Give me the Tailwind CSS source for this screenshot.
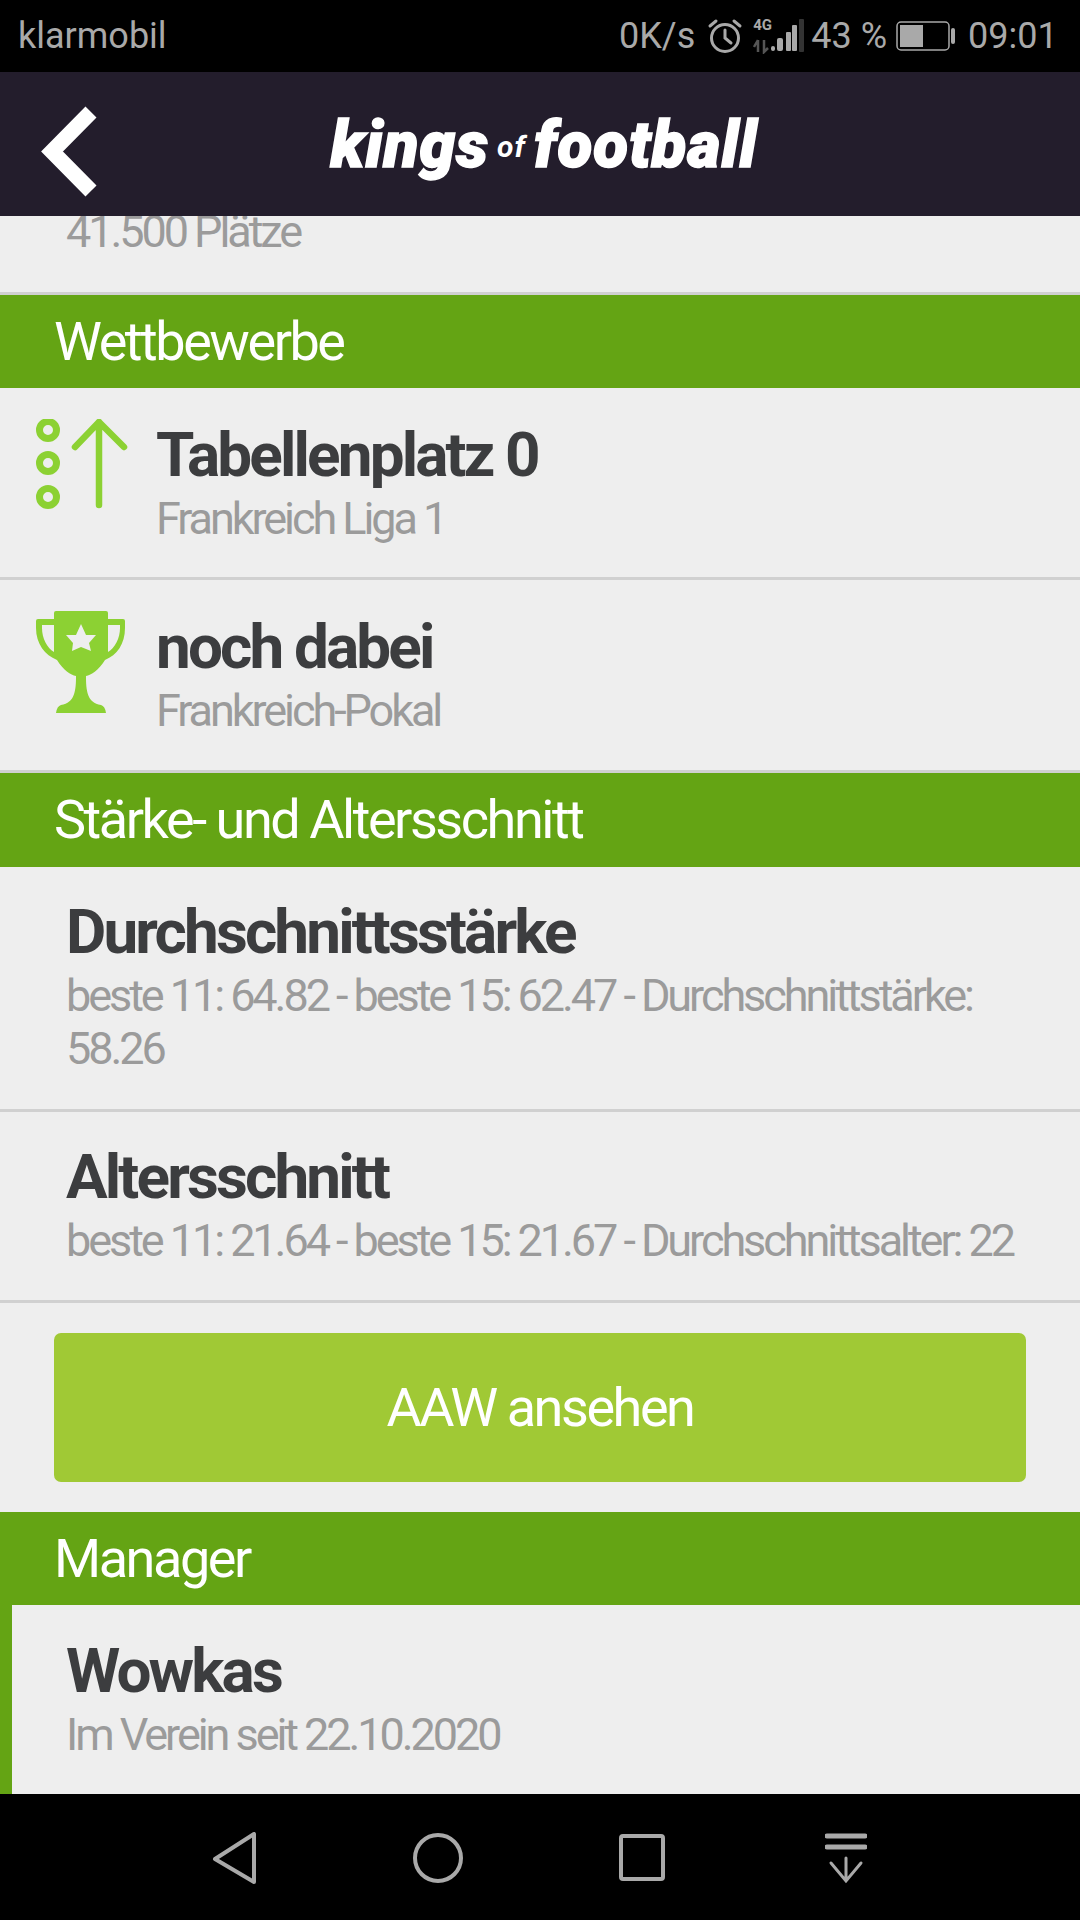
<!DOCTYPE html>
<html lang="de">
<head>
    <meta charset="UTF-8">
    <meta name="viewport" content="width=device-width, initial-scale=1.0">
    <title>Kings of Football</title>
    <script src="https://cdn.jsdelivr.net/npm/@tailwindcss/browser@4"></script>
</head>
<body class="bg-[#eeeeee] font-['Roboto',sans-serif]">
<div class="w-[1080px] h-[1920px] flex flex-col overflow-hidden">

    <!-- status bar -->
    <div class="h-[72px] bg-black flex items-center pl-[18px] text-[#a9a9a9] text-[36px] shrink-0">
        <span class="w-[601px]">klarmobil</span>
        <span>0K/s</span>
        <svg class="ml-[12px]" width="36" height="36" viewBox="0 0 36 36" fill="none" stroke="#a9a9a9" stroke-width="3">
            <circle cx="18" cy="20" r="13.5"/>
            <path d="M18 12v8l6 5M3 8l6-5M33 8l-6-5" stroke-linecap="round"/>
        </svg>
        <div class="relative ml-[10px] w-[52px] h-[36px]">
            <span class="absolute left-0 top-0 text-[15px] leading-[15px] font-bold">4G</span>
            <svg class="absolute left-0 top-0" width="52" height="36" viewBox="0 0 52 36">
                <path d="M5 22v12M1 29l4-7M11 22v12l4-4" fill="none" stroke="#555" stroke-width="2.5"/>
                <rect x="18" y="28" width="4" height="5" rx="2" fill="#a9a9a9"/>
                <rect x="24" y="20" width="6" height="13" rx="2" fill="#a9a9a9"/>
                <rect x="33" y="14" width="5" height="19" rx="1" fill="#a9a9a9"/>
                <rect x="39" y="7" width="5" height="26" rx="1" fill="#a9a9a9"/>
                <rect x="46" y="1" width="5" height="33" rx="1" fill="#333"/>
            </svg>
        </div>
        <span class="ml-[6px]">43 %</span>
        <svg class="ml-[9px]" width="60" height="32" viewBox="0 0 60 32">
            <rect x="1" y="2" width="52" height="28" rx="4" fill="none" stroke="#a9a9a9" stroke-width="1.5"/>
            <rect x="4" y="5" width="23" height="22" fill="#a9a9a9"/>
            <rect x="55" y="8" width="4" height="16" rx="2" fill="#a9a9a9"/>
        </svg>
        <span class="ml-[12px]">09:01</span>
    </div>

    <!-- header -->
    <div class="relative h-[144px] bg-[#231d2c] flex items-center justify-center shrink-0">
        <svg class="absolute left-0 top-[-72px]" width="110" height="216" viewBox="0 0 110 216" fill="none" stroke="#fff" stroke-width="15.5">
            <path d="M91 112 52 151.5 91 191"/>
        </svg>
        <div class="text-white font-black italic text-[64px] tracking-[1px] leading-[80px] ml-[8px] mt-[5px] [-webkit-text-stroke:1.5px_white]">kings<span class="text-[30px] font-bold mx-[8px] align-[10px] [-webkit-text-stroke:0]">of</span>football</div>
    </div>

    <!-- content -->
    <div class="flex-1 flex flex-col overflow-hidden">
        <div class="h-[79px] overflow-hidden border-b-[3px] border-[#d0d0d0] shrink-0">
            <p class="pl-[66px] text-[#9b9b9b] text-[45px] tracking-[-3.06px] leading-[52px] mt-[-10px]">41.500 Plätze</p>
        </div>

        <div class="h-[93px] bg-[#64a414] text-white text-[54px] tracking-[-2.45px] leading-[94px] pl-[54px] shrink-0">Wettbewerbe</div>

        <div class="h-[192px] flex border-b-[3px] border-[#d0d0d0] shrink-0">
            <svg class="ml-[36px] mt-[31px] shrink-0" width="92" height="92" viewBox="36 419 92 92" fill="none" stroke="#8cd133">
                <circle cx="48" cy="430" r="8.5" stroke-width="7"/>
                <circle cx="48" cy="463" r="8.5" stroke-width="7"/>
                <circle cx="48" cy="497" r="8.5" stroke-width="7"/>
                <path d="M99 505V422M75 447l24-25 25 25" stroke-width="6.5" stroke-linecap="round" stroke-linejoin="round"/>
            </svg>
            <div class="ml-[28px] pt-[37px]">
                <p class="text-[#3c3d3f] text-[62px] font-bold leading-[60px] tracking-[-2.85px]">Tabellenplatz 0</p>
                <p class="text-[#9b9b9b] text-[45px] leading-[53px] tracking-[-3.06px] mt-[7px]">Frankreich Liga 1</p>
            </div>
        </div>

        <div class="h-[193px] flex border-b-[3px] border-[#d0d0d0] shrink-0">
            <svg class="ml-[36px] mt-[31px] shrink-0" width="92" height="102" viewBox="36 611 92 102" fill="#8cd133" fill-rule="evenodd">
                <path d="M56 611H106Q108 611 108 613V619H123Q125 619 125 621V628C125 644 117 655 105 660C99 670 91 675 86 676C86 690 87 703 101 705Q105 706 106 713H56Q57 706 61 705C75 703 76 690 76 676C71 675 63 670 57 660C45 655 36 644 36 628V621Q36 619 38 619H54V613Q54 611 56 611ZM42 625V628C42 638 47 648 54 652V625ZM108 625V652C115 648 120 638 120 628V625Z"/>
                <path d="M81 624 86 635H96L89 643 91 651 81 647 72 651 73 643 66 635H76Z" fill="#eeeeee"/>
            </svg>
            <div class="ml-[28px] pt-[37px]">
                <p class="text-[#3c3d3f] text-[62px] font-bold leading-[60px] tracking-[-2.85px]">noch dabei</p>
                <p class="text-[#9b9b9b] text-[45px] leading-[53px] tracking-[-3.06px] mt-[7px]">Frankreich-Pokal</p>
            </div>
        </div>

        <div class="h-[94px] bg-[#64a414] text-white text-[54px] tracking-[-2.45px] leading-[94px] pl-[54px] shrink-0">Stärke- und Altersschnitt</div>

        <div class="h-[245px] border-b-[3px] border-[#d0d0d0] pl-[66px] pt-[35px] shrink-0">
            <p class="text-[#3c3d3f] text-[62px] font-bold leading-[60px] tracking-[-2.85px]">Durchschnittsstärke</p>
            <p class="text-[#9b9b9b] text-[45px] leading-[53px] tracking-[-3.06px] mt-[7px]">beste 11: 64.82 - beste 15: 62.47 - Durchschnittstärke:<br>58.26</p>
        </div>

        <div class="h-[191px] border-b-[3px] border-[#d0d0d0] pl-[66px] pt-[35px] shrink-0">
            <p class="text-[#3c3d3f] text-[62px] font-bold leading-[60px] tracking-[-2.85px]">Altersschnitt</p>
            <p class="text-[#9b9b9b] text-[45px] leading-[53px] tracking-[-3.06px] mt-[7px]">beste 11: 21.64 - beste 15: 21.67 - Durchschnittsalter: 22</p>
        </div>

        <div class="h-[209px] px-[54px] pt-[30px] shrink-0">
            <div class="h-[149px] bg-[#a0c935] rounded-[7px] flex items-center justify-center text-white text-[54px] tracking-[-2.45px]">AAW ansehen</div>
        </div>

        <div class="h-[93px] bg-[#64a414] text-white text-[54px] tracking-[-2.45px] leading-[94px] pl-[54px] shrink-0">Manager</div>

        <div class="flex-1 border-l-[12px] border-[#64a414] pl-[54px] pt-[36px]">
            <p class="text-[#3c3d3f] text-[62px] font-bold leading-[60px] tracking-[-2.85px]">Wowkas</p>
            <p class="text-[#9b9b9b] text-[45px] leading-[53px] tracking-[-3.06px] mt-[7px]">Im Verein seit 22.10.2020</p>
        </div>
    </div>

    <!-- android nav bar -->
    <div class="h-[126px] bg-black flex pl-[212px] pt-[38px] shrink-0">
        <svg width="44" height="52" viewBox="0 0 44 52" fill="none" stroke="#a9a9a9" stroke-width="4" stroke-linejoin="round">
            <path d="M42 2v48L3 27z"/>
        </svg>
        <svg class="ml-[157px]" width="50" height="52" viewBox="0 0 50 52" fill="none" stroke="#a9a9a9" stroke-width="4">
            <circle cx="25" cy="26" r="23"/>
        </svg>
        <svg class="ml-[156px]" width="46" height="52" viewBox="0 0 46 52" fill="none" stroke="#a9a9a9" stroke-width="4">
            <rect x="2" y="4" width="42" height="43" rx="2"/>
        </svg>
        <svg class="ml-[160px]" width="42" height="52" viewBox="0 0 42 52" fill="none" stroke="#a9a9a9" stroke-linecap="round">
            <path d="M2 4h38M2 15h38" stroke-width="5"/>
            <path d="M21 26v22M6 31l15 18 15-18" stroke-width="3"/>
        </svg>
    </div>
</div>
</body>
</html>
